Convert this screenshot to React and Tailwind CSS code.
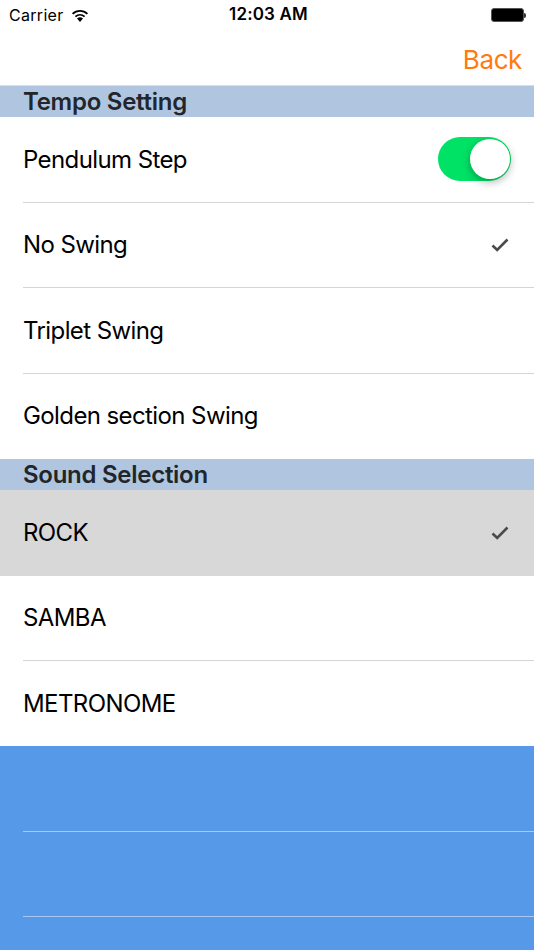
const font = { fontFamily: '"Inter", "Liberation Sans", sans-serif' };

function Check({ className = "" }) {
  return (
    <svg width="20" height="16" viewBox="0 0 20 16" className={className}>
      <path d="M2.5 8.5 L7.2 13 L17.5 2.5" fill="none" stroke="#4a4a4a" strokeWidth="2.6" />
    </svg>
  );
}

function Row({ label, right, selected, line = true, last = false }) {
  return (
    <div className={`${last ? "h-[85px]" : "h-[85.5px]"} relative flex items-center justify-between pl-[23px] pr-[23px] text-[24px] tracking-[-0.6px] text-black ${selected ? "bg-[#d8d8d8]" : "bg-white"}`}>
      <span>{label}</span>
      {right}
      {line && <div className="absolute left-[23px] right-0 bottom-0 h-px bg-[#d4d4d6]" />}
    </div>
  );
}

function Header({ children }) {
  return (
    <div className="h-[31px] bg-[#b0c6e0] pl-[23px] pt-[1px] flex items-center text-[24px] font-semibold tracking-[-0.27px] text-[#22262b]">
      {children}
    </div>
  );
}

export default function App() {
  return (
    <div style={font} className="w-[534px] h-[950px] overflow-hidden bg-white flex flex-col">
      <div className="h-[30px] flex items-center justify-between pl-[9px] pr-[8px] relative text-black">
        <div className="flex items-center gap-[7px] text-[16px] tracking-[0.3px]">
          <span>Carrier</span>
          <svg width="18" height="13" viewBox="0 0 18 13">
            <path d="M9 13 L6 9.6 A4.6 4.6 0 0 1 12 9.6 Z" fill="#000" />
            <path d="M4.4 7.6 A7 7 0 0 1 13.6 7.6" fill="none" stroke="#000" strokeWidth="1.8" />
            <path d="M1.6 4.8 A10.8 10.8 0 0 1 16.4 4.8" fill="none" stroke="#000" strokeWidth="1.8" />
          </svg>
        </div>
        <span className="absolute left-[3px] right-0 text-center text-[17px] font-semibold tracking-[0.15px]">12:03 AM</span>
        <div className="flex items-center">
          <div className="w-[33px] h-[14px] rounded-[3px] border border-[#555] bg-black" />
          <div className="w-[2px] h-[5px] bg-[#333] rounded-r-sm" />
        </div>
      </div>
      <div className="h-[56px] border-b border-[#d3dfec] flex items-center justify-end pr-[12px] pt-[3px] text-[26px] tracking-[-0.4px] text-[#ff7a0f]">
        Back
      </div>
      <Header>Tempo Setting</Header>
      <Row
        label="Pendulum Step"
        right={
          <div className="w-[73px] h-[44px] rounded-full bg-[#00e266] relative -mt-[2px]">
            <div className="absolute right-[1px] top-[2px] w-[40px] h-[40px] rounded-full bg-white shadow-[0_3px_8px_rgba(0,0,0,0.3)]" />
          </div>
        }
      />
      <Row label="No Swing" right={<Check className="mr-[1px]" />} />
      <Row label="Triplet Swing" />
      <Row label="Golden section Swing" line={false} />
      <Header>Sound Selection</Header>
      <Row label="ROCK" selected right={<Check className="mr-[1px]" />} line={false} />
      <Row label="SAMBA" />
      <Row label="METRONOME" line={false} last />
      <div className="flex-1 bg-[#5599e8]">
        <div className="h-[85.5px] relative"><div className="absolute left-[23px] right-0 bottom-0 h-px bg-[#a9c9f0]" /></div>
        <div className="h-[85px] relative"><div className="absolute left-[23px] right-0 bottom-0 h-px bg-[#a9c9f0]" /></div>
      </div>
    </div>
  );
}
